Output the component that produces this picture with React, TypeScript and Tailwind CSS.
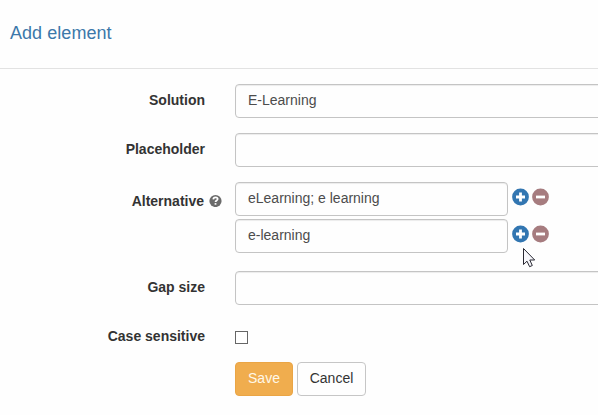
import React from "react";

function Row({ label, help = false, className, children }: { label: string; help?: boolean; className: string; children: React.ReactNode }) {
  return (
    <div className={`flex shrink-0 ${className}`}>
      <div className={`flex shrink-0 text-[14px] leading-[20px] font-bold text-[#333] ${help ? "w-[222px] pt-[9px]" : "w-[205px] pt-[6px]"} justify-end`}>
        <span>{label}</span>
        {help && <HelpIcon />}
      </div>
      <div className={help ? "ml-[13px]" : "ml-[30px]"}>{children}</div>
    </div>
  );
}

function HelpIcon() {
  return (
    <svg className="mt-[3px] ml-[5px] shrink-0" width="13" height="13" viewBox="0 0 13 13">
      <circle cx="6.5" cy="7" r="6.1" fill="#6b6b6b" />
      <path d="M4.3 5.4C4.4 4 5.2 3.4 6.5 3.4C7.8 3.4 8.7 4 8.7 5.1C8.7 6.5 6.5 6.5 6.5 8.1" fill="none" stroke="#fff" strokeWidth="1.7" />
      <path d="M5.6 9.1H7.4V10.7H5.6Z" fill="#fff" />
    </svg>
  );
}

function Field({ value = "", wide = false }: { value?: string; wide?: boolean }) {
  return (
    <div className={`${wide ? "w-[400px]" : "w-[273px]"} h-[34px] shrink-0 rounded-[4px] border border-[#c4c4c4] bg-[#fefefe] px-3 pt-[5px] text-[14px] leading-[20px] text-[#4c4c4c] shadow-[inset_0_1px_1px_rgba(0,0,0,0.075)]`}>
      {value}
    </div>
  );
}

function CircleIcon({ color, plus = false }: { color: string; plus?: boolean }) {
  return (
    <svg width="18" height="18" viewBox="0 0 18 18">
      <circle cx="8.5" cy="9" r="8.4" fill={color} />
      <path d={plus ? "M4 9H13M8.5 4.5V13.5" : "M4 9H13"} stroke="#fff" strokeWidth="2.8" strokeLinejoin="round" />
    </svg>
  );
}

function Alternative({ value }: { value: string }) {
  return (
    <div className="flex">
      <Field value={value} />
      <div className="ml-1 flex gap-[2px] pt-[6px]">
        <CircleIcon color="#3276b1" plus />
        <CircleIcon color="#a67c7f" />
      </div>
    </div>
  );
}

export default function App() {
  return (
    <div className="relative h-[415px] w-[598px] overflow-hidden bg-[#fefefe] font-['Liberation_Sans',Arial,sans-serif]">
      <header className="h-[69px] border-b border-[#e2e2e2] pt-[21px] pl-[10px] text-[18px] leading-[24px] tracking-[0.05px] text-[#3c78aa]">Add element</header>
      <main className="flex flex-col pt-[15px]">
        <Row label="Solution" className="h-[49px]"><Field wide value="E-Learning" /></Row>
        <Row label="Placeholder" className="h-[49px]"><Field wide /></Row>
        <Row label="Alternative" help className="h-[89px]">
          <div className="flex flex-col gap-[3px]">
            <Alternative value="eLearning; e learning" />
            <Alternative value="e-learning" />
          </div>
        </Row>
        <Row label="Gap size" className="h-[49px]"><Field wide /></Row>
        <Row label="Case sensitive" className="h-[42px]">
          <input type="checkbox" aria-label="Case sensitive" className="mt-[11px] block h-[13px] w-[13px] appearance-none border border-[#666] bg-white" />
        </Row>
        <div className="flex gap-1 pl-[235px] text-[14px] leading-[20px]">
          <button className="h-[34px] w-[58px] rounded-[4px] border border-[#eaa545] bg-[#f0ad4e] pb-[2px] text-[#fff8e8]">Save</button>
          <button className="h-[34px] w-[69px] rounded-[4px] border border-[#c6c6c6] bg-[#fefefe] pb-[2px] text-[#333]">Cancel</button>
        </div>
      </main>
      <svg className="absolute top-[247px] left-[522px]" width="15" height="22" viewBox="0 0 15 22">
        <path d="M1.5 1.5V17.5L5 14.2L7.6 19.7L10.3 18.5L7.8 13H12.7Z" fill="#f7f7fb" stroke="#282832" strokeWidth="1" />
      </svg>
    </div>
  );
}
